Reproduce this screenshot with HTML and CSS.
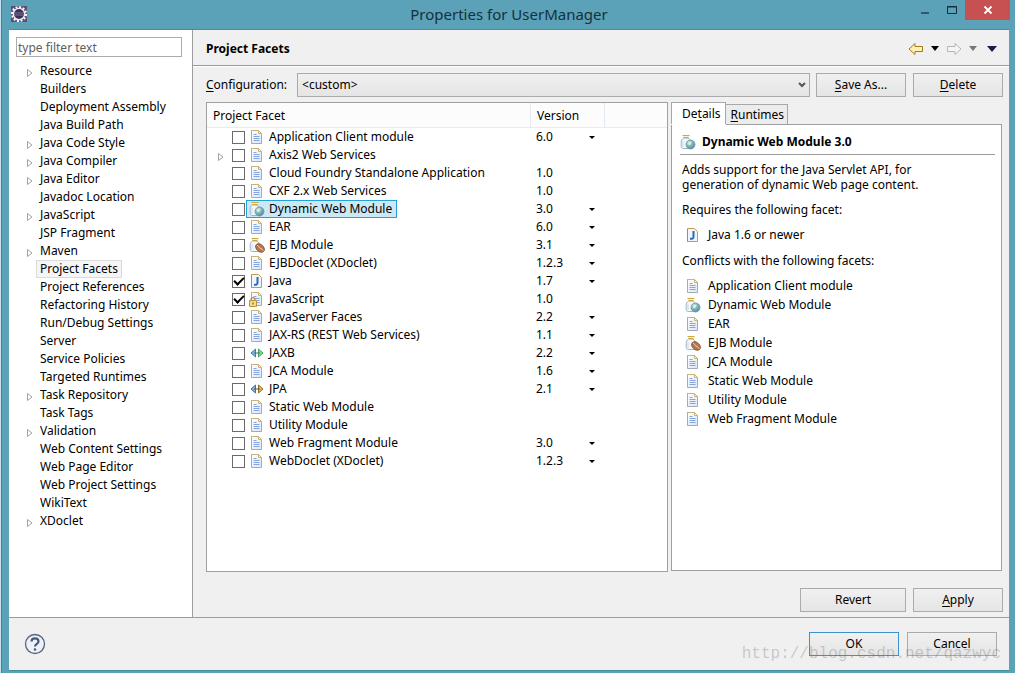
FILE: index.html
```html
<!DOCTYPE html>
<html lang="en">
<head>
<meta charset="utf-8">
<title>Properties for UserManager</title>
<link rel="stylesheet" href="styles.css">
</head>
<body>
<svg class="sprite" aria-hidden="true">
  <defs>
    <linearGradient id="paper" x1="0" y1="0" x2="1" y2="1"><stop offset="0" stop-color="#fff"/><stop offset="1" stop-color="#dbe6f7"/></linearGradient>
    <radialGradient id="globe-fill" cx=".35" cy=".3" r=".8"><stop offset="0" stop-color="#cfe9e4"/><stop offset=".5" stop-color="#7fb3ae"/><stop offset="1" stop-color="#4f7fae"/></radialGradient>
  </defs>
  <symbol id="doc" viewBox="0 0 16 16">
    <path d="M2.500 1.500h7l3 3v10h-10z" fill="url(#paper)" stroke="#a3abba"/>
    <path d="M2 1.500h7.500l3 3M9.500 1.500v3h3" fill="none" stroke="#c9b47a"/>
    <path d="M4.500 5.500h3M4.500 7.500h6M4.500 9.500h6M4.500 11.500h6" stroke="#86a5dc"/>
  </symbol>
  <symbol id="jar" viewBox="0 0 16 16">
    <path d="M3.500 4C1.500 5.500 1.200 6.500 1.200 8.500v4c0 1.300.8 2 2 2h7.300V8c0-1.500-1-3-2.500-4z" fill="#f2f7fb" stroke="#9db3c3"/>
    <path d="M2.500 1.500h7M3.500 3.500h5" stroke="#d0a73c" stroke-width="1.200"/>
    <path d="M3 2.500h6" stroke="#fff3b8"/>
    <path d="M3 7v6" stroke="#c9dbe8"/>
  </symbol>
  <symbol id="web" viewBox="0 0 16 16">
    <use href="#jar"/>
    <circle cx="10.500" cy="10.500" r="4.500" fill="url(#globe-fill)" stroke="#6c93ae" stroke-width=".8"/>
    <path d="M8 9l2-1.500 1.500 1L10 11l-1.500-.3z" fill="#dcefdc"/>
  </symbol>
  <symbol id="ejb" viewBox="0 0 16 16">
    <use href="#jar"/>
    <ellipse cx="11" cy="11" rx="5" ry="3.500" transform="rotate(42 11 11)" fill="#b9784c" stroke="#7b4423" stroke-width=".8"/>
    <path d="M7.800 8.200c2 .3 2 2.400 3.400 3 1.500.5 2.500 1 3 2.600" fill="none" stroke="#f0d3b5"/>
  </symbol>
  <symbol id="java" viewBox="0 0 16 16">
    <path d="M2.500 1.500h7l3 3v10h-10z" fill="#eef5ff" stroke="#c09c50"/>
    <path d="M2.500 2v12.500" stroke="#8a8f90"/>
    <path d="M8.500 4v5.500c0 2-1 2.500-3.500 2.300" fill="none" stroke="#2c69b8" stroke-width="2"/>
  </symbol>
  <symbol id="locked" viewBox="0 0 16 16">
    <use href="#doc"/>
    <path d="M2 10V8.500c0-2.500 4-2.500 4 0V10" fill="none" stroke="#b18a35" stroke-width="1.200"/>
    <path d="M.5 9.500h7v6h-7z" fill="#f5dc82" stroke="#b8923c"/>
    <path d="M4 11.500v2" stroke="#634a16"/>
  </symbol>
  <symbol id="jaxb" viewBox="0 0 16 16">
    <path d="M6.500 4v8L2 8z" fill="#83b3db" stroke="#4d7ba6"/>
    <path d="M9.500 4v8L14 8z" fill="#7bdc8b" stroke="#4aa85e"/>
    <path d="M5 8h6" stroke="#3c6b86"/>
  </symbol>
  <symbol id="jpa" viewBox="0 0 16 16">
    <path d="M6.500 4v8L2 8z" fill="#83b3db" stroke="#4a6c98"/>
    <path d="M9.500 4v8L14 8z" fill="#e5b94f" stroke="#936e22"/>
    <path d="M5 8h6" stroke="#53585c"/>
  </symbol>
  <symbol id="twist" viewBox="0 0 8 10"><path d="M1.500 1.500v7L6 5z" fill="#fff" stroke="#a3a3a3"/></symbol>
  <symbol id="drop" viewBox="0 0 8 5"><path d="M1 1h6L4 4z" fill="currentColor"/></symbol>
  <symbol id="drop-big" viewBox="0 0 10 6"><path d="M0 0h10L5 6z" fill="currentColor"/></symbol>
  <symbol id="arrow" viewBox="0 0 16 14"><path d="M1 7l6-5.500v3h7.500v5H7v3z" fill="var(--arrow-fill)" stroke="currentColor" stroke-linejoin="round"/></symbol>
</svg>

<div class="window">
  <header class="titlebar">
    <svg class="app-icon" viewBox="0 0 18 18" aria-hidden="true">
      <rect x="1" y="1" width="16" height="16" fill="#5c4d78"/>
      <circle cx="9" cy="9" r="7" fill="none" stroke="#fff" stroke-width="2" stroke-dasharray="2 1.660"/>
      <circle cx="9" cy="9" r="5.600" fill="#3a3158" stroke="#f1eff6" stroke-width="1.400"/>
      <path d="M4.500 8h9M4.500 10h9" stroke="#8a83a8" stroke-width=".8"/>
    </svg>
    <h1 class="title">Properties for UserManager</h1>
    <div class="window-buttons">
      <button class="win" aria-label="Minimize"><svg width="12" height="12" viewBox="0 0 12 12"><path d="M2 9h8" stroke="#35586a" stroke-width="2"/></svg></button>
      <button class="win" aria-label="Maximize"><svg width="12" height="12" viewBox="0 0 12 12"><path d="M1.500 2.500h9v7h-9zM1 3h10" fill="none" stroke="#1c2b33"/></svg></button>
      <button class="win close" aria-label="Close"><svg width="10" height="10" viewBox="0 0 10 10"><path d="M1.500 1.500l7 7M8.500 1.500l-7 7" stroke="#fff" stroke-width="1.800"/></svg></button>
    </div>
  </header>

  <div class="content">
    <nav class="sidebar">
      <input class="filter" type="text" placeholder="type filter text" aria-label="Filter">
      <ul class="tree">
        <li><button class="twist" aria-label="Expand"><svg><use href="#twist"/></svg></button><span>Resource</span></li>
        <li><span>Builders</span></li>
        <li><span>Deployment Assembly</span></li>
        <li><span>Java Build Path</span></li>
        <li><button class="twist" aria-label="Expand"><svg><use href="#twist"/></svg></button><span>Java Code Style</span></li>
        <li><button class="twist" aria-label="Expand"><svg><use href="#twist"/></svg></button><span>Java Compiler</span></li>
        <li><button class="twist" aria-label="Expand"><svg><use href="#twist"/></svg></button><span>Java Editor</span></li>
        <li><span>Javadoc Location</span></li>
        <li><button class="twist" aria-label="Expand"><svg><use href="#twist"/></svg></button><span>JavaScript</span></li>
        <li><span>JSP Fragment</span></li>
        <li><button class="twist" aria-label="Expand"><svg><use href="#twist"/></svg></button><span>Maven</span></li>
        <li><span class="current">Project Facets</span></li>
        <li><span>Project References</span></li>
        <li><span>Refactoring History</span></li>
        <li><span>Run/Debug Settings</span></li>
        <li><span>Server</span></li>
        <li><span>Service Policies</span></li>
        <li><span>Targeted Runtimes</span></li>
        <li><button class="twist" aria-label="Expand"><svg><use href="#twist"/></svg></button><span>Task Repository</span></li>
        <li><span>Task Tags</span></li>
        <li><button class="twist" aria-label="Expand"><svg><use href="#twist"/></svg></button><span>Validation</span></li>
        <li><span>Web Content Settings</span></li>
        <li><span>Web Page Editor</span></li>
        <li><span>Web Project Settings</span></li>
        <li><span>WikiText</span></li>
        <li><button class="twist" aria-label="Expand"><svg><use href="#twist"/></svg></button><span>XDoclet</span></li>
      </ul>
    </nav>

    <main class="page">
      <div class="page-head">
        <h2>Project Facets</h2>
        <div class="history">
          <button class="back" aria-label="Back"><svg width="16" height="14"><use href="#arrow"/></svg></button>
          <button aria-label="Back history"><svg width="8" height="5"><use href="#drop-big"/></svg></button>
          <button class="forward" aria-label="Forward"><svg width="16" height="14"><use href="#arrow"/></svg></button>
          <button class="dim" aria-label="Forward history"><svg width="8" height="5"><use href="#drop-big"/></svg></button>
          <button class="menu" aria-label="Menu"><svg width="10" height="6"><use href="#drop-big"/></svg></button>
        </div>
      </div>

      <div class="page-body">
        <div class="config">
          <label for="configuration"><u>C</u>onfiguration:</label>
          <div class="combo">
            <select id="configuration"><option>&lt;custom&gt;</option></select>
            <svg class="chevron" viewBox="0 0 8 6" aria-hidden="true"><path d="M1 1l3 3 3-3" fill="none" stroke="#555" stroke-width="2"/></svg>
          </div>
          <div class="config-buttons">
            <button class="btn"><span><u>S</u>ave As...</span></button>
            <button class="btn"><span><u>D</u>elete</span></button>
          </div>
        </div>

        <div class="panes">
          <div class="facets">
            <table>
              <colgroup><col class="col-facet"><col class="col-version"><col></colgroup>
              <thead><tr><th>Project Facet</th><th>Version</th><th></th></tr></thead>
              <tbody>
                <tr><td><label class="facet"><input type="checkbox"><span class="name"><svg><use href="#doc"/></svg>Application Client module</span></label></td><td><div class="ver">6.0<button aria-label="Change version"><svg><use href="#drop"/></svg></button></div></td><td></td></tr>
                <tr><td><label class="facet"><svg class="expand"><use href="#twist"/></svg><input type="checkbox"><span class="name"><svg><use href="#doc"/></svg>Axis2 Web Services</span></label></td><td></td><td></td></tr>
                <tr><td><label class="facet"><input type="checkbox"><span class="name"><svg><use href="#doc"/></svg>Cloud Foundry Standalone Application</span></label></td><td><div class="ver">1.0</div></td><td></td></tr>
                <tr><td><label class="facet"><input type="checkbox"><span class="name"><svg><use href="#doc"/></svg>CXF 2.x Web Services</span></label></td><td><div class="ver">1.0</div></td><td></td></tr>
                <tr><td><label class="facet"><input type="checkbox"><span class="name selected"><svg><use href="#web"/></svg>Dynamic Web Module</span></label></td><td><div class="ver">3.0<button aria-label="Change version"><svg><use href="#drop"/></svg></button></div></td><td></td></tr>
                <tr><td><label class="facet"><input type="checkbox"><span class="name"><svg><use href="#doc"/></svg>EAR</span></label></td><td><div class="ver">6.0<button aria-label="Change version"><svg><use href="#drop"/></svg></button></div></td><td></td></tr>
                <tr><td><label class="facet"><input type="checkbox"><span class="name"><svg><use href="#ejb"/></svg>EJB Module</span></label></td><td><div class="ver">3.1<button aria-label="Change version"><svg><use href="#drop"/></svg></button></div></td><td></td></tr>
                <tr><td><label class="facet"><input type="checkbox"><span class="name"><svg><use href="#doc"/></svg>EJBDoclet (XDoclet)</span></label></td><td><div class="ver">1.2.3<button aria-label="Change version"><svg><use href="#drop"/></svg></button></div></td><td></td></tr>
                <tr><td><label class="facet"><input type="checkbox" checked><span class="name"><svg><use href="#java"/></svg>Java</span></label></td><td><div class="ver">1.7<button aria-label="Change version"><svg><use href="#drop"/></svg></button></div></td><td></td></tr>
                <tr><td><label class="facet"><input type="checkbox" checked><span class="name"><svg><use href="#locked"/></svg>JavaScript</span></label></td><td><div class="ver">1.0</div></td><td></td></tr>
                <tr><td><label class="facet"><input type="checkbox"><span class="name"><svg><use href="#doc"/></svg>JavaServer Faces</span></label></td><td><div class="ver">2.2<button aria-label="Change version"><svg><use href="#drop"/></svg></button></div></td><td></td></tr>
                <tr><td><label class="facet"><input type="checkbox"><span class="name"><svg><use href="#doc"/></svg>JAX-RS (REST Web Services)</span></label></td><td><div class="ver">1.1<button aria-label="Change version"><svg><use href="#drop"/></svg></button></div></td><td></td></tr>
                <tr><td><label class="facet"><input type="checkbox"><span class="name"><svg><use href="#jaxb"/></svg>JAXB</span></label></td><td><div class="ver">2.2<button aria-label="Change version"><svg><use href="#drop"/></svg></button></div></td><td></td></tr>
                <tr><td><label class="facet"><input type="checkbox"><span class="name"><svg><use href="#doc"/></svg>JCA Module</span></label></td><td><div class="ver">1.6<button aria-label="Change version"><svg><use href="#drop"/></svg></button></div></td><td></td></tr>
                <tr><td><label class="facet"><input type="checkbox"><span class="name"><svg><use href="#jpa"/></svg>JPA</span></label></td><td><div class="ver">2.1<button aria-label="Change version"><svg><use href="#drop"/></svg></button></div></td><td></td></tr>
                <tr><td><label class="facet"><input type="checkbox"><span class="name"><svg><use href="#doc"/></svg>Static Web Module</span></label></td><td></td><td></td></tr>
                <tr><td><label class="facet"><input type="checkbox"><span class="name"><svg><use href="#doc"/></svg>Utility Module</span></label></td><td></td><td></td></tr>
                <tr><td><label class="facet"><input type="checkbox"><span class="name"><svg><use href="#doc"/></svg>Web Fragment Module</span></label></td><td><div class="ver">3.0<button aria-label="Change version"><svg><use href="#drop"/></svg></button></div></td><td></td></tr>
                <tr><td><label class="facet"><input type="checkbox"><span class="name"><svg><use href="#doc"/></svg>WebDoclet (XDoclet)</span></label></td><td><div class="ver">1.2.3<button aria-label="Change version"><svg><use href="#drop"/></svg></button></div></td><td></td></tr>
              </tbody>
            </table>
          </div>

          <section class="info">
            <div class="tabs" role="tablist">
              <button class="tab active" role="tab" aria-selected="true"><span>De<u>t</u>ails</span></button>
              <button class="tab" role="tab" aria-selected="false"><span><u>R</u>untimes</span></button>
            </div>
            <div class="details" role="tabpanel">
              <h3><svg><use href="#web"/></svg>Dynamic Web Module 3.0</h3>
              <div class="details-text">
                <p>Adds support for the Java Servlet API, for<br>generation of dynamic Web page content.</p>
                <p>Requires the following facet:</p>
                <ul>
                  <li><svg><use href="#java"/></svg>Java 1.6 or newer</li>
                </ul>
                <p>Conflicts with the following facets:</p>
                <ul>
                  <li><svg><use href="#doc"/></svg>Application Client module</li>
                  <li><svg><use href="#web"/></svg>Dynamic Web Module</li>
                  <li><svg><use href="#doc"/></svg>EAR</li>
                  <li><svg><use href="#ejb"/></svg>EJB Module</li>
                  <li><svg><use href="#doc"/></svg>JCA Module</li>
                  <li><svg><use href="#doc"/></svg>Static Web Module</li>
                  <li><svg><use href="#doc"/></svg>Utility Module</li>
                  <li><svg><use href="#doc"/></svg>Web Fragment Module</li>
                </ul>
              </div>
            </div>
          </section>
        </div>

        <div class="page-actions">
          <button class="btn wide">Revert</button>
          <button class="btn"><span><u>A</u>pply</span></button>
        </div>
      </div>
    </main>
  </div>

  <footer class="dialog-actions">
    <button class="help" aria-label="Help"><svg width="22" height="22" viewBox="0 0 22 22"><circle cx="11" cy="11" r="9.500" fill="#eef1f8" stroke="#56647f" stroke-width="1.300"/><path d="M7.500 8.500c0-4.300 7-4.300 7 0 0 2.500-3.500 2.300-3.500 5" fill="none" stroke="#4b5a7a" stroke-width="2.200"/><circle cx="11" cy="16.500" r="1.300" fill="#4b5a7a"/></svg></button>
    <button class="btn default">OK</button>
    <button class="btn">Cancel</button>
    <span class="watermark">http://blog.csdn.net/qazwyc</span>
  </footer>
</div>
</body>
</html>
```
FILE: styles.css
```css
* { box-sizing: border-box; }

body {
  margin: 0;
  font: 12px/18px "Noto Sans", "Open Sans", sans-serif;
  color: #000;
  background: #5ba2b9;
}

h1, h2, h3, p, ul { margin: 0; padding: 0; }
ul { list-style: none; }
button, input, select { font: inherit; color: inherit; }
button { padding: 0; border: 0; background: none; display: flex; align-items: center; justify-content: center; }
svg { display: block; flex: none; }
u { text-decoration: underline; text-underline-offset: 2px; }

.sprite { position: absolute; width: 0; height: 0; }

.window {
  display: flex;
  flex-direction: column;
  min-height: 100vh;
  padding: 0 6px 2px 8px;
  border-left: 1px solid #c9e3ee;
  box-shadow: inset 1px 0 #3f8199;
}

/* Title bar */
.titlebar {
  display: grid;
  grid-template-columns: 130px 1fr 130px;
  align-items: start;
  height: 30px;
  border-bottom: 1px solid #478ba0;
}
.app-icon { width: 18px; height: 18px; margin: 5px 0 0 1px; }
.title { font-size: 15px; line-height: 28px; font-weight: 400; text-align: center; color: #16303c; white-space: nowrap; }
.window-buttons { display: flex; justify-content: flex-end; margin-right: -1px; }
.win { width: 27px; height: 20px; }
.win.close { width: 45px; background: #c75050; }

.content { display: flex; flex: 1; border-bottom: 1px solid #9c9c9c; }

/* Navigation tree */
.sidebar { width: 184px; flex: none; padding: 7px 10px 0 7px; background: #fff; border-right: 1px solid #9c9c9c; }
.filter { display: block; width: 100%; height: 20px; padding: 0 1px; border: 1px solid #ababab; background: #fff; }
.filter::placeholder { color: #606060; opacity: 1; }
.tree { margin-top: 5px; }
.tree li { display: flex; height: 18px; padding-left: 8px; white-space: nowrap; }
.tree li > span { border: 1px solid transparent; line-height: 16px; padding: 0 3px; }
.tree li > span:first-child { margin-left: 12px; }
.tree .current { background: #f5f5f5; border-color: #dadada; }
.twist { width: 12px; }
.twist svg { width: 8px; height: 10px; margin-top: 3px; }

/* Page */
.page { flex: 1; min-width: 0; display: flex; flex-direction: column; background: #f0f0f0; }
.page-head { display: flex; justify-content: space-between; align-items: center; height: 36px; padding: 2px 12px 0 13px; border-bottom: 1px solid #9c9c9c; box-shadow: 0 1px #fff; }
.page-head h2 { font-size: 12px; }
.history { display: flex; align-items: center; gap: 7px; }
.history .back { color: #a37a22; --arrow-fill: #fff0ad; }
.history .forward { color: #b5b5b5; --arrow-fill: #f5f5f5; transform: scaleX(-1); }
.history .dim { color: #777; }
.history .menu { color: #1c1c4a; margin-left: 3px; }

.page-body { flex: 1; display: flex; flex-direction: column; padding: 7px 6px 5px 13px; }
.config { display: flex; align-items: center; gap: 10px; }
.config-buttons { display: flex; gap: 7px; margin-left: -4px; }
.combo { position: relative; flex: 1; }
.combo select { display: block; width: 100%; height: 24px; padding: 0 4px; appearance: none; border: 1px solid #ababab; border-radius: 0; background: linear-gradient(#f0f0f0, #e5e5e5); }
.chevron { position: absolute; right: 4px; top: 9px; width: 8px; height: 6px; }

.btn { width: 90px; height: 24px; border: 1px solid #ababab; background: linear-gradient(#f0f0f0, #e5e5e5); }
.btn.wide { width: 106px; }
.btn.default { border-color: #3c92cf; }

.panes { flex: 1; display: flex; gap: 3px; margin-top: 5px; }
.facets { flex: 1; border: 1px solid #a0a0a0; background: #fff; }
.facets table { width: 100%; table-layout: fixed; border-collapse: separate; border-spacing: 0; }
.col-facet { width: 324px; }
.col-version { width: 74px; }
th { height: 25px; padding: 1px 6px 0; font-weight: 400; text-align: left; background: #fcfcfc; border-right: 1px solid #e2e9f2; border-bottom: 1px solid #ebebeb; }
th:last-child { border-right: 0; }
td { height: 18px; padding: 0; }
.facet { display: flex; align-items: center; height: 18px; padding-left: 25px; white-space: nowrap; }
.expand { width: 8px; height: 10px; margin: 3px 7px 0 -15px; }
.facet input { appearance: none; width: 13px; height: 13px; margin: 1px 1px 0 0; border: 1px solid #6b6b6b; background: #fff; display: grid; place-items: center; }
.facet input:checked::before { content: ""; width: 8px; height: 4px; border: solid #000; border-width: 0 0 2px 2px; transform: rotate(-45deg); margin-bottom: 3px; }
.name { display: flex; align-items: center; height: 18px; padding: 0 4px 0 2px; gap: 4px; border: 1px solid transparent; }
.name svg { width: 16px; height: 16px; }
.name.selected { background: #cbe8f6; border-color: #26a0da; }
.ver { display: flex; justify-content: space-between; height: 18px; padding: 0 8px 0 5px; }
.ver button { width: 10px; }
.ver svg { width: 8px; height: 5px; }

/* Details */
.info { width: 332px; flex: none; display: flex; flex-direction: column; padding-right: 1px; }
.tabs { display: flex; align-items: flex-end; height: 22px; }
.tab { height: 20px; padding: 0 3px 0 5px; border: 1px solid #a8a8a8; border-left: 0; border-bottom: 0; background: #ececec; line-height: 20px; }
.tab.active { height: 22px; padding: 0 4px 0 10px; border-left: 1px solid #a8a8a8; background: #fff; box-shadow: 0 1px #fff; z-index: 1; }
.details { flex: 1; margin-bottom: 1px; padding: 8px 6px 0 8px; border: 1px solid #a0a0a0; background: #fff; }
.details h3 { display: flex; align-items: center; gap: 6px; height: 22px; padding-bottom: 4px; border-bottom: 1px solid #9c9c9c; font-size: 12px; }
.details svg { width: 16px; height: 16px; }
.details-text { padding-left: 2px; line-height: 15px; }
.details-text p { margin-top: 10px; white-space: nowrap; }
.details-text p:first-child { margin-top: 7px; }
.details-text ul { margin-top: 8px; padding-left: 3px; }
.details-text ul + p { margin-top: 9px; }
.details-text li { display: flex; align-items: center; gap: 7px; height: 19px; white-space: nowrap; }

.page-actions { display: flex; justify-content: flex-end; gap: 7px; margin-top: 16px; }

/* Dialog buttons */
.dialog-actions { position: relative; display: flex; align-items: center; gap: 8px; height: 53px; padding: 0 12px 0 15px; background: #f0f0f0; border-bottom: 1px solid #478ba0; }
.help { margin-right: auto; }
.watermark { position: absolute; right: 8px; bottom: 6px; font: 16px/20px "Liberation Mono", monospace; color: rgba(110, 110, 110, .32); pointer-events: none; }
```
